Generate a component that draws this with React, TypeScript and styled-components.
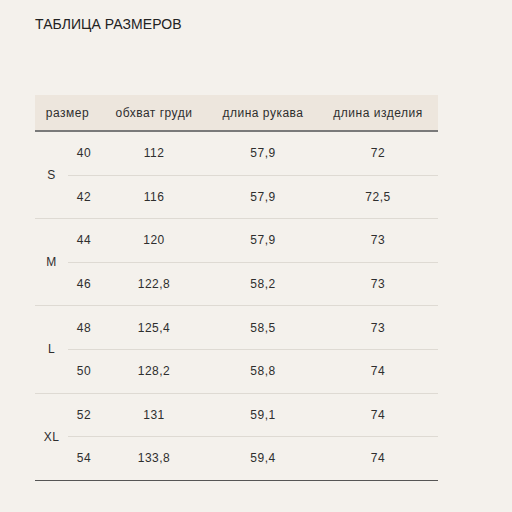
import React from "react";
import styled, { createGlobalStyle } from "styled-components";

const Global = createGlobalStyle`
  html, body { margin: 0; padding: 0; background: #f4f1ec; }
  body { font-family: "Liberation Sans", Arial, sans-serif; color: #333; }
`;

const Page = styled.div`
  padding: 16px 0 0 35px;
`;

const Title = styled.h1`
  margin: 0 0 62px 0;
  font-size: 14px;
  font-weight: normal;
  line-height: 17px;
  color: #222;
  letter-spacing: 0.05px;
`;

const Table = styled.table`
  border-collapse: collapse;
  table-layout: fixed;
  width: 403px;
  font-size: 12px;
  letter-spacing: 0.5px;
  color: #2e2e2e;
`;

const HeadRow = styled.tr`
  background: #ede6dd;
  height: 36px;
  border-bottom: 2px solid #7a7a7a;
`;

const Th = styled.th`
  font-weight: normal;
  text-align: center;
  padding: 0;
  vertical-align: middle;
`;

const Td = styled.td<{ $last?: boolean }>`
  text-align: center;
  padding: 0;
  height: 42.6px;
  vertical-align: middle;
  border-bottom: 1px solid ${(p) => (p.$last ? "#555" : "#dedad3")};
`;

type Row = [string, string, string, string];
const groups: { size: string; rows: Row[] }[] = [
  { size: "S", rows: [["40", "112", "57,9", "72"], ["42", "116", "57,9", "72,5"]] },
  { size: "M", rows: [["44", "120", "57,9", "73"], ["46", "122,8", "58,2", "73"]] },
  { size: "L", rows: [["48", "125,4", "58,5", "73"], ["50", "128,2", "58,8", "74"]] },
  { size: "XL", rows: [["52", "131", "59,1", "74"], ["54", "133,8", "59,4", "74"]] },
];

export default function App() {
  return (
    <Page>
      <Global />
      <Title>ТАБЛИЦА РАЗМЕРОВ</Title>
      <Table>
        <colgroup>
          <col style={{ width: 33 }} />
          <col style={{ width: 32 }} />
          <col style={{ width: 108 }} />
          <col style={{ width: 110 }} />
          <col style={{ width: 120 }} />
        </colgroup>
        <thead>
          <HeadRow>
            <Th colSpan={2}>размер</Th>
            <Th>обхват груди</Th>
            <Th>длина рукава</Th>
            <Th>длина изделия</Th>
          </HeadRow>
        </thead>
        <tbody>
          {groups.map((g, gi) => {
            const lastGroup = gi === groups.length - 1;
            return g.rows.map((r, ri) => {
              const last = lastGroup && ri === 1;
              return (
                <tr key={g.size + ri}>
                  {ri === 0 && (
                    <Td rowSpan={2} $last={lastGroup}>
                      {g.size}
                    </Td>
                  )}
                  {r.map((v, ci) => (
                    <Td key={ci} $last={last}>
                      {v}
                    </Td>
                  ))}
                </tr>
              );
            });
          })}
        </tbody>
      </Table>
    </Page>
  );
}
